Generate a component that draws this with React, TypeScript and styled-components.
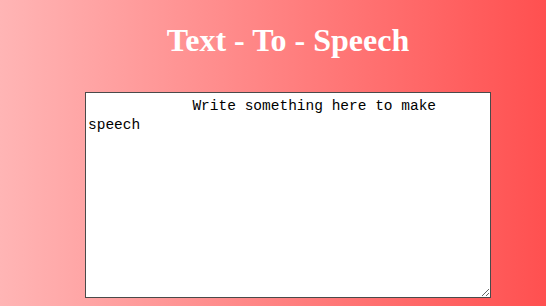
import React from "react";
import styled, { createGlobalStyle } from "styled-components";

const Global = createGlobalStyle`
  html, body { margin: 0; padding: 0; height: 100%; }
  body {
    background: linear-gradient(to right, #ffb5b5, #ff5050);
    min-height: 306px;
    overflow: hidden;
  }
`;

const Page = styled.main`
  display: flex;
  flex-direction: column;
  align-items: center;
  padding: 22px 0 0 30px;
`;

const Title = styled.h1`
  margin: 0;
  font-family: "Liberation Serif", "Times New Roman", serif;
  font-weight: bold;
  font-size: 32px;
  line-height: 37px;
  color: #ffffff;
`;

const Area = styled.textarea`
  margin-top: 33px;
  box-sizing: border-box;
  width: 406px;
  height: 206px;
  padding: 4px 2px 2px 2px;
  border: 1px solid #4a4a4a;
  background: #fff;
  color: #000;
  font-family: "Liberation Mono", "Courier New", monospace;
  font-size: 14.5px;
  line-height: 19px;
  resize: both;
  outline: none;
`;

export default function App() {
  return (
    <>
      <Global />
      <Page>
        <Title>Text - To - Speech</Title>
        <Area defaultValue={"            Write something here to make speech"} />
      </Page>
    </>
  );
}
